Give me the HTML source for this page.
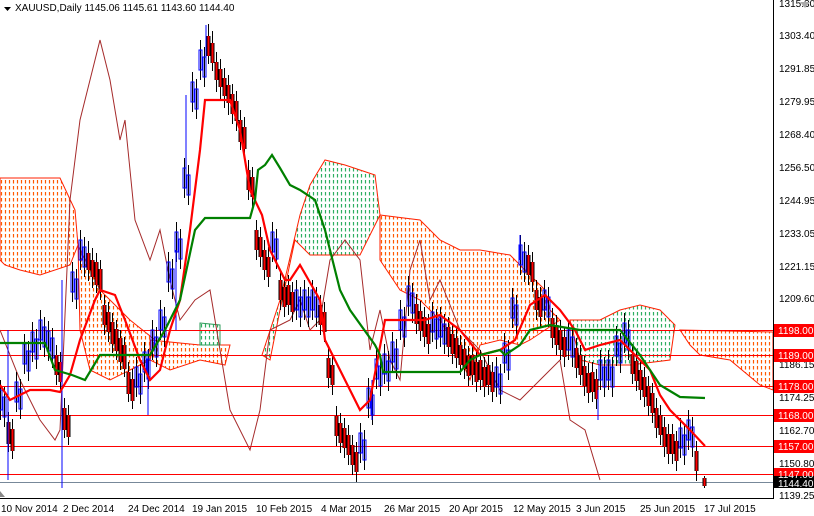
<!DOCTYPE html>
<html><head><meta charset="utf-8"><style>
html,body{margin:0;padding:0;background:#fff;width:814px;height:516px;overflow:hidden}
svg{display:block;font-family:"Liberation Sans",sans-serif}
</style></head><body>
<svg width="814" height="516" viewBox="0 0 814 516" xmlns="http://www.w3.org/2000/svg">
<defs>
<pattern id="po" width="4" height="6" patternUnits="userSpaceOnUse"><line x1="1.5" y1="0" x2="1.5" y2="3.5" stroke="#ff5a00" stroke-width="1.2"/></pattern>
<pattern id="pg" width="4" height="6" patternUnits="userSpaceOnUse"><line x1="1.5" y1="0" x2="1.5" y2="3.5" stroke="#2eae60" stroke-width="1.2"/></pattern>
<clipPath id="cp"><rect x="0" y="0" width="773" height="498"/></clipPath>
</defs>
<g clip-path="url(#cp)">
<g stroke-width="1">
<polygon fill="url(#po)" stroke="#ff2000" points="0,178 60,178 75,210 78,245 70,265 40,275 20,270 5,265 0,260"/>
<polygon fill="url(#po)" stroke="#ff2000" points="78,245 100,290 130,320 155,340 150,360 130,370 110,380 90,370 80,330"/>
<polygon fill="url(#po)" stroke="#ff2000" points="150,340 200,345 230,345 225,365 200,360 170,370 150,360"/>
<polygon fill="url(#pg)" stroke="#2e9b5a" points="200,323 220,325 220,345 200,345"/>
<polygon fill="url(#pg)" stroke="#ff2000" points="262,355 280,300 300,215 310,185 325,160 345,165 360,170 375,175 380,215 360,255 330,255 310,255 295,240 280,310 270,360"/>
<polygon fill="url(#po)" stroke="#ff2000" points="380,215 420,220 440,240 460,250 480,250 510,255 530,275 545,290 550,310 560,320 545,330 530,340 520,345 500,340 480,345 470,380 455,345 440,320 420,300 400,290 380,260"/>
<polygon fill="url(#pg)" stroke="#ff2000" points="570,320 600,320 620,310 640,305 660,310 675,325 670,360 630,365 600,365 580,360"/>
<polygon fill="url(#po)" stroke="#ff2000" points="680,330 773,332 773,390 760,385 730,360 700,355 690,345"/>
</g>
<g stroke="#ff0000" stroke-width="1">
<line x1="0" x2="773" y1="330.5" y2="330.5"/><line x1="0" x2="773" y1="355.5" y2="355.5"/><line x1="0" x2="773" y1="386.5" y2="386.5"/><line x1="0" x2="773" y1="415.5" y2="415.5"/><line x1="0" x2="773" y1="446.5" y2="446.5"/><line x1="0" x2="773" y1="474.5" y2="474.5"/>
</g>
<line x1="0" x2="773" y1="482.5" y2="482.5" stroke="#778899"/>
<polyline fill="none" stroke="#a52a2a" stroke-width="1" points="0,330 20,380 40,420 55,440 60,430 70,200 80,120 100,40 110,80 120,140 125,120 135,220 150,260 160,230 170,280 180,320 195,300 210,290 220,350 230,410 250,450 260,410 270,330 290,320 300,300 310,330 320,320 330,260 345,240 360,260 370,350 380,310 390,360 400,380 410,270 420,240 430,300 440,280 460,330 480,350 500,390 520,400 540,380 560,360 570,420 585,430 600,480"/>
<g id="cd">
<path fill="none" stroke="#000" stroke-width="1" d="M0.5 380V420M8.5 412V452M16.5 372V412M24.5 334V374M32.5 322V362M40.5 310V350M48.5 321V361M56.5 345V385M64.5 398V438M72.5 262V302M80.5 230V270M88.5 241V281M96.5 253V293M104.5 295V335M112.5 313V353M120.5 330V370M128.5 362V402M136.5 357V397M144.5 342V382M152.5 320V360M160.5 300V340M168.5 252V292M176.5 222V262M184.5 158V198M192.5 72V112M200.5 40V80M208.5 24V64M216.5 52V92M224.5 68V108M232.5 84V124M240.5 110V150M248.5 160V200M256.5 220V260M264.5 240V280M272.5 222V262M280.5 270V310M288.5 275V315M296.5 280V320M304.5 280V320M312.5 280V320M320.5 295V335M328.5 348V388M336.5 406V446M344.5 418V458M352.5 435V475M360.5 423V463M368.5 378V418M376.5 349V389M384.5 344V384M392.5 332V372M400.5 300V340M408.5 276V316M416.5 294V334M424.5 307V347M432.5 302V342M440.5 307V347M448.5 317V357M456.5 328V368M464.5 339V379M472.5 345V385M480.5 350V390M488.5 355V395M496.5 357V397M504.5 333V373M512.5 288V328M520.5 235V275M528.5 245V285M536.5 280V320M544.5 280V320M552.5 308V348M560.5 320V360M568.5 320V360M576.5 338V378M584.5 356V396M592.5 362V402M600.5 350V390M608.5 350V390M616.5 326V366M624.5 313V353M632.5 344V384M640.5 360V400M648.5 376V416M656.5 398V438M664.5 417V457M672.5 424V464M680.5 418V458M688.5 410V450"/>
<path fill="none" stroke="#000" stroke-width="4" d="M8.5 422V444M56.5 355V375M64.5 408V430M88.5 253V270M96.5 262V285M104.5 305V325M112.5 322V344M120.5 338V362M128.5 372V394M208.5 36V56M216.5 62V80M224.5 78V96M232.5 94V114M240.5 120V142M248.5 170V190M256.5 230V250M264.5 250V270M280.5 280V300M288.5 285V305M320.5 305V325M328.5 358V378M336.5 416V436M344.5 428V448M352.5 445V465M416.5 304V324M424.5 317V337M448.5 327V347M456.5 338V358M464.5 349V369M472.5 355V375M480.5 360V380M488.5 365V385M528.5 255V275M536.5 290V310M552.5 318V338M560.5 330V350M576.5 348V368M584.5 366V386M592.5 372V392M632.5 354V374M640.5 370V390M648.5 386V406M656.5 408V428M664.5 427V447M672.5 434V454"/>
<path fill="none" stroke="#ff0000" stroke-width="2" d="M8.5 422V444M56.5 355V375M64.5 408V430M88.5 253V270M96.5 262V285M104.5 305V325M112.5 322V344M120.5 338V362M128.5 372V394M208.5 36V56M216.5 62V80M224.5 78V96M232.5 94V114M240.5 120V142M248.5 170V190M256.5 230V250M264.5 250V270M280.5 280V300M288.5 285V305M320.5 305V325M328.5 358V378M336.5 416V436M344.5 428V448M352.5 445V465M416.5 304V324M424.5 317V337M448.5 327V347M456.5 338V358M464.5 349V369M472.5 355V375M480.5 360V380M488.5 365V385M528.5 255V275M536.5 290V310M552.5 318V338M560.5 330V350M576.5 348V368M584.5 366V386M592.5 372V392M632.5 354V374M640.5 370V390M648.5 386V406M656.5 408V428M664.5 427V447M672.5 434V454"/>
<path fill="none" stroke="#0000ff" stroke-width="1" d="M-1 390V410h3V390zM15 382V402h3V382zM23 344V364h3V344zM31 332V352h3V332zM39 320V340h3V320zM47 331V351h3V331zM71 272V292h3V272zM79 240V260h3V240zM135 367V387h3V367zM143 352V372h3V352zM151 330V350h3V330zM159 310V330h3V310zM167 262V282h3V262zM175 232V252h3V232zM183 168V188h3V168zM191 82V102h3V82zM199 50V70h3V50zM271 232V252h3V232zM295 290V310h3V290zM303 290V310h3V290zM311 290V310h3V290zM359 433V453h3V433zM367 388V408h3V388zM375 359V379h3V359zM383 354V374h3V354zM391 342V362h3V342zM399 310V330h3V310zM407 286V306h3V286zM431 312V332h3V312zM439 317V337h3V317zM495 367V387h3V367zM503 343V363h3V343zM511 298V318h3V298zM519 245V265h3V245zM543 290V310h3V290zM567 330V350h3V330zM599 360V380h3V360zM607 360V380h3V360zM615 336V356h3V336zM623 323V343h3V323zM679 428V448h3V428zM687 420V440h3V420z"/>
</g>
<use href="#cd" transform="translate(4,7)"/>
<path fill="none" stroke="#000" stroke-width="1" d="M696.5 441V481M704.5 476V488"/>
<path fill="none" stroke="#000" stroke-width="4" d="M696.5 451V471M704.5 478V486"/>
<path fill="none" stroke="#ff0000" stroke-width="2" d="M696.5 451V471M704.5 478V486"/>
<path fill="none" stroke="#0000ff" stroke-width="1" d="M8 330V480M62 280V488M148 350V415M176 250V330M186 95V180M372 380V420M598 390V420M206 25V60M520 235V260"/>
<polyline fill="none" stroke="#ff0000" stroke-width="2.2" points="0,385 10,400 30,390 50,390 60,392 70,375 80,340 95,300 100,290 115,295 125,320 140,360 150,380 160,370 170,330 180,300 190,230 200,150 205,100 215,100 230,100 240,130 250,190 262,215 270,250 285,280 290,280 300,265 320,300 325,340 345,380 360,410 370,400 385,320 400,320 425,320 440,315 460,330 480,355 500,350 515,340 530,305 545,295 560,310 575,330 585,350 600,345 620,340 640,360 650,370 660,395 670,410 690,430 705,446"/>
<polyline fill="none" stroke="#008000" stroke-width="2.2" points="0,343 45,343 55,370 72,375 85,380 100,355 150,355 165,330 180,300 195,230 205,218 250,218 255,200 258,170 265,165 272,155 280,168 290,185 300,190 315,200 325,230 340,290 350,310 375,345 380,355 383,372 405,372 440,372 460,372 470,360 480,355 500,350 505,355 520,345 530,330 550,325 580,330 620,330 640,355 660,385 680,397 705,398"/>
</g>
<line x1="773.5" x2="773.5" y1="0" y2="499" stroke="#000"/>
<line x1="0" x2="774" y1="498.5" y2="498.5" stroke="#000"/>
<g font-size="10" fill="#000">
<text x="779" y="7">1315.30</text><text x="779" y="39">1303.40</text><text x="779" y="72">1291.85</text><text x="779" y="105">1279.95</text><text x="779" y="138">1268.40</text><text x="779" y="171">1256.50</text><text x="779" y="204">1244.95</text><text x="779" y="237">1233.05</text><text x="779" y="270">1221.15</text><text x="779" y="302">1209.60</text><text x="779" y="368">1186.15</text><text x="779" y="401">1174.25</text><text x="779" y="434">1162.70</text><text x="779" y="467">1150.80</text><text x="779" y="499">1139.25</text>
</g>
<g fill="#ff0000">
<rect x="774" y="324" width="40" height="13"/><rect x="774" y="349" width="40" height="13"/><rect x="774" y="380" width="40" height="13"/><rect x="774" y="409" width="40" height="13"/><rect x="774" y="440" width="40" height="13"/><rect x="774" y="468" width="40" height="13"/>
</g>
<rect x="774" y="476" width="40" height="12" fill="#000"/>
<g font-size="10" fill="#fff">
<text x="778" y="334">1198.00</text><text x="778" y="359">1189.00</text><text x="778" y="390">1178.00</text><text x="778" y="419">1168.00</text><text x="778" y="450">1157.00</text><text x="778" y="478">1147.00</text><text x="778" y="487">1144.40</text>
</g>
<g font-size="10" fill="#000">
<text x="1" y="512">10 Nov 2014</text><text x="63" y="512">2 Dec 2014</text><text x="128" y="512">24 Dec 2014</text><text x="192" y="512">19 Jan 2015</text><text x="256" y="512">10 Feb 2015</text><text x="321" y="512">4 Mar 2015</text><text x="384" y="512">26 Mar 2015</text><text x="449" y="512">20 Apr 2015</text><text x="513" y="512">12 May 2015</text><text x="576" y="512">3 Jun 2015</text><text x="640" y="512">25 Jun 2015</text><text x="704" y="512">17 Jul 2015</text>
</g>
<polygon points="0,491 5,497 0,497" fill="#888"/>
<polygon points="4,7 11,7 7.5,11" fill="#000"/>
<text x="15" y="11" font-size="10" fill="#000">XAUUSD,Daily  1145.06 1145.61 1143.60 1144.40</text>
<polygon points="800,2 810,2 805,8" fill="#aaa"/>
</svg>
</body></html>
